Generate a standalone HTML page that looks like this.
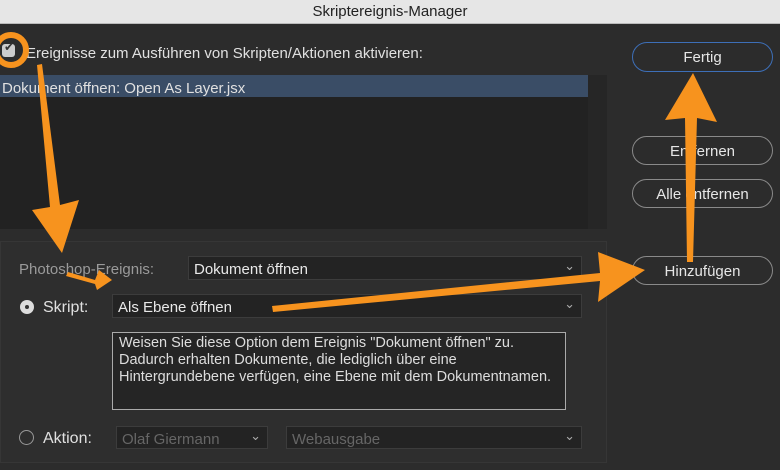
<!DOCTYPE html>
<html><head><meta charset="utf-8"><style>
body{margin:0;width:780px;height:470px;overflow:hidden;background:#2c2c2c;font-family:"Liberation Sans",sans-serif;position:relative}
.a{position:absolute}
.t{color:#e0e0e0;font-size:15px}
.btn{position:absolute;left:632px;width:141px;height:29px;border:1.5px solid #8a8a8a;border-radius:15px;box-sizing:border-box;color:#e6e6e6;font-size:15px;text-align:center;line-height:29px}
.sel{position:absolute;background:#232323;border:1px solid #3c3c3c;box-sizing:border-box;color:#e8e8e8;font-size:15px;padding-left:5px;line-height:25px}
.sel:after{content:"⌄";position:absolute;right:6px;top:-4px;color:#aaa;font-size:13px}
</style></head><body>
<div class="a" style="left:0;top:0;width:780px;height:23px;background:#e6e6e6;border-bottom:1px solid #bbb;text-align:center;font-size:15px;line-height:23px;color:#222">Skriptereignis-Manager</div>
<div class="a" style="left:2px;top:44px;width:13px;height:13px;background:#ccc;border-radius:3px"></div>
<div class="a" style="left:4px;top:40px;color:#333;font-size:12px">✔</div>
<div class="a t" style="left:26px;top:45px">Ereignisse zum Ausführen von Skripten/Aktionen aktivieren:</div>
<div class="a" style="left:0;top:75px;width:607px;height:154px;background:#222"></div>
<div class="a" style="left:0;top:75px;width:588px;height:22px;background:#3a4d66"></div>
<div class="a t" style="left:2px;top:80px">Dokument öffnen: Open As Layer.jsx</div>
<div class="a" style="left:588px;top:75px;width:19px;height:154px;background:#262626"></div>
<div class="a" style="left:0;top:241px;width:607px;height:222px;background:#2e2e2e;border:1px solid #363636;box-sizing:border-box"></div>
<div class="btn" style="top:42px;border-color:#3d6fb8;height:30px;line-height:30px">Fertig</div>
<div class="btn" style="top:136px">Entfernen</div>
<div class="btn" style="top:179px">Alle entfernen</div>
<div class="btn" style="top:256px">Hinzufügen</div>
<div class="a" style="left:19px;top:261px;color:#9a9a9a;font-size:15px">Photoshop-Ereignis:</div>
<div class="sel" style="left:188px;top:256px;width:394px;height:24px">Dokument öffnen</div>
<div class="a" style="left:20px;top:300px;width:14px;height:14px;border-radius:50%;background:#ddd"></div>
<div class="a" style="left:25px;top:305px;width:4px;height:4px;border-radius:50%;background:#333"></div>
<div class="a t" style="left:43px;top:299px;font-size:16px">Skript:</div>
<div class="sel" style="left:112px;top:294px;width:470px;height:24px">Als Ebene öffnen</div>
<div class="a" style="left:112px;top:332px;width:454px;height:78px;border:1.5px solid #aaa;box-sizing:border-box;background:#252525;color:#ddd;font-size:14.5px;line-height:17px;padding:2px 6px;white-space:nowrap">Weisen Sie diese Option dem Ereignis "Dokument öffnen" zu.<br>Dadurch erhalten Dokumente, die lediglich über eine<br>Hintergrundebene verfügen, eine Ebene mit dem Dokumentnamen.</div>
<div class="a" style="left:19px;top:430px;width:13px;height:13px;border-radius:50%;border:1.5px solid #999"></div>
<div class="a t" style="left:43px;top:430px;font-size:16px">Aktion:</div>
<div class="sel" style="left:116px;top:426px;width:152px;height:23px;color:#666">Olaf Giermann</div>
<div class="sel" style="left:286px;top:426px;width:296px;height:23px;color:#666">Webausgabe</div>
<svg class="a" style="left:0;top:0" width="780" height="470">
<g fill="#f7931e" stroke="none">
<circle cx="11" cy="50" r="15" fill="none" stroke="#f7931e" stroke-width="6"/>
<path d="M37,65 L42,64 L60,205 L79,200 L62,253 L32,210 L50,207 Z"/>
<path d="M66,276 L68,272 L95,280 L99,270 L112,280 L97,290 L95,284 Z"/>
<path d="M272,306 L600,273 L598,252 L645,270 L598,302 L600,281 L273,312 Z"/>
<path d="M687,262 L693,262 L697,118 L717,122 L693,73 L665,120 L685,118 Z"/>
</g></svg>
</body></html>
